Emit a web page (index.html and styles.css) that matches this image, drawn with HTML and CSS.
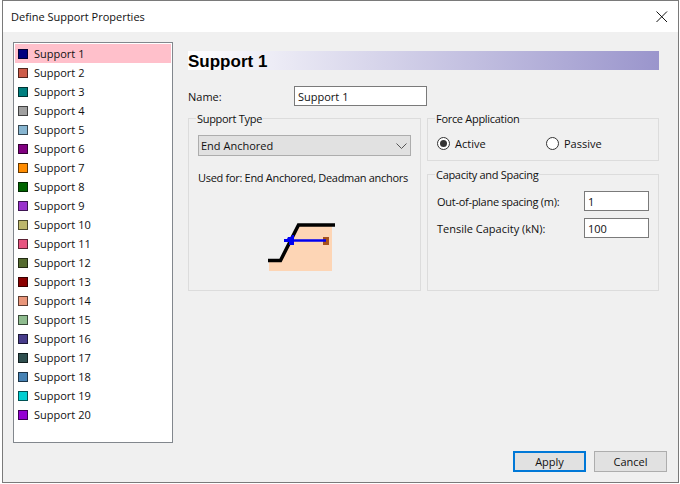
FILE: index.html
```html
<!DOCTYPE html>
<html lang="en">
<head>
<meta charset="utf-8">
<title>Define Support Properties</title>
<link rel="stylesheet" href="styles.css">
</head>
<body>
<div class="dialog">
  <header class="titlebar">
    <span class="title">Define Support Properties</span>
    <svg class="close" width="12" height="12" viewBox="0 0 12 12"><path d="M.5.5l10.500 10.500M11 .5L.5 11" stroke="#111" stroke-width="1" fill="none"/></svg>
  </header>
  <div class="content">
    <main class="main">
      <ul class="list">
        <li class="item selected"><i class="swatch c1"></i>Support 1</li>
        <li class="item"><i class="swatch c2"></i>Support 2</li>
        <li class="item"><i class="swatch c3"></i>Support 3</li>
        <li class="item"><i class="swatch c4"></i>Support 4</li>
        <li class="item"><i class="swatch c5"></i>Support 5</li>
        <li class="item"><i class="swatch c6"></i>Support 6</li>
        <li class="item"><i class="swatch c7"></i>Support 7</li>
        <li class="item"><i class="swatch c8"></i>Support 8</li>
        <li class="item"><i class="swatch c9"></i>Support 9</li>
        <li class="item"><i class="swatch c10"></i>Support 10</li>
        <li class="item"><i class="swatch c11"></i>Support 11</li>
        <li class="item"><i class="swatch c12"></i>Support 12</li>
        <li class="item"><i class="swatch c13"></i>Support 13</li>
        <li class="item"><i class="swatch c14"></i>Support 14</li>
        <li class="item"><i class="swatch c15"></i>Support 15</li>
        <li class="item"><i class="swatch c16"></i>Support 16</li>
        <li class="item"><i class="swatch c17"></i>Support 17</li>
        <li class="item"><i class="swatch c18"></i>Support 18</li>
        <li class="item"><i class="swatch c19"></i>Support 19</li>
        <li class="item"><i class="swatch c20"></i>Support 20</li>
      </ul>
      <section class="panel">
        <h1 class="heading">Support 1</h1>
        <div class="name-row">
          <span class="name-label">Name:</span>
          <div class="field name-field">Support 1</div>
        </div>
        <div class="groups">
          <div class="group type-group">
            <span class="legend">Support Type</span>
            <div class="select">
              <span>End Anchored</span>
              <svg width="11" height="6" viewBox="0 0 11 6"><path d="M.5.5l5 5 5-5" fill="none" stroke="#555" stroke-width="1"/></svg>
            </div>
            <p class="used">Used for: End Anchored, Deadman anchors</p>
            <svg class="diagram" width="68" height="52" viewBox="0 0 68 52">
              <path d="M1 40H13L31 4H64V49H1Z" fill="#fdd5b5"/>
              <path d="M0 38.500H12.500L30.500 3H67" fill="none" stroke="#000" stroke-width="3.500"/>
              <rect x="55" y="15" width="6" height="8" fill="#a8521c"/>
              <path d="M20 18.500H58" stroke="#0000f0" stroke-width="2.500"/>
              <path d="M16 17h3l1-2h3l1-2h2v10h-5v-3h-5z" fill="#0000f0"/>
            </svg>
          </div>
          <div class="side">
            <div class="group force-group">
              <span class="legend">Force Application</span>
              <div class="radios">
                <span class="radio-option active"><i class="radio"></i>Active</span>
                <span class="radio-option"><i class="radio"></i>Passive</span>
              </div>
            </div>
            <div class="group capacity-group">
              <span class="legend">Capacity and Spacing</span>
              <div class="row"><span class="tight">Out-of-plane spacing (m):</span><div class="field small-field">1</div></div>
              <div class="row"><span>Tensile Capacity (kN):</span><div class="field small-field">100</div></div>
            </div>
          </div>
        </div>
      </section>
    </main>
    <footer class="footer">
      <button class="btn primary">Apply</button>
      <button class="btn">Cancel</button>
    </footer>
  </div>
</div>
</body>
</html>
```
FILE: styles.css
```css
* { box-sizing: border-box; }
html, body { margin: 0; padding: 0; }
body {
  width: 680px;
  height: 484px;
  background: #fff;
  padding: 0 1px 1px 2px;
  font-family: "Open Sans", "Noto Sans", sans-serif;
  font-size: 11px;
  color: #111;
  overflow: hidden;
}
.dialog {
  width: 100%;
  height: 100%;
  border: 1px solid #7a7a7a;
  background: #f0f0f0;
  display: flex;
  flex-direction: column;
}
.titlebar {
  height: 31px;
  flex: none;
  background: #fff;
  display: flex;
  align-items: center;
  justify-content: space-between;
  padding: 0 10px 0 8px;
}
.content {
  flex: 1;
  display: flex;
  flex-direction: column;
  padding: 10px;
}
.main { flex: 1; display: flex; gap: 15px; }
.list {
  width: 160px;
  height: 401px;
  flex: none;
  margin: 0;
  padding: 1px;
  list-style: none;
  background: #fff;
  border: 1px solid #82878d;
}
.item {
  height: 19px;
  display: flex;
  align-items: center;
  padding-left: 3px;
}
.selected { background: #ffc0cb; }
.swatch {
  width: 10px;
  height: 10px;
  margin-right: 6px;
  border: 1px solid rgba(0,0,0,.6);
}
.c1 { background-color: #000080; }
.c2 { background-color: #cd5c49; }
.c3 { background-color: #008080; }
.c4 { background-color: #a0a0a0; }
.c5 { background-color: #87b5d0; }
.c6 { background-color: #800080; }
.c7 { background-color: #ff8c00; }
.c8 { background-color: #006400; }
.c9 { background-color: #9932cc; }
.c10 { background-color: #bdb76b; }
.c11 { background-color: #e75480; }
.c12 { background-color: #556b2f; }
.c13 { background-color: #8b0000; }
.c14 { background-color: #e9967a; }
.c15 { background-color: #8fbc8f; }
.c16 { background-color: #483d8b; }
.c17 { background-color: #2f4f4f; }
.c18 { background-color: #4682b4; }
.c19 { background-color: #00ced1; }
.c20 { background-color: #9400d3; }
.panel { width: 471px; flex: none; padding-top: 9px; }
.heading {
  margin: 0;
  height: 19px;
  font: bold 17px/21px "Liberation Sans", sans-serif;
  color: #000;
  background: linear-gradient(90deg, #fff, #9a95cc);
}
.name-row {
  display: flex;
  align-items: center;
  height: 20px;
  margin-top: 16px;
}
.name-label { width: 106px; }
.field {
  background: #fff;
  border: 1px solid #7a7a7a;
  display: flex;
  align-items: center;
  padding-left: 3px;
  height: 20px;
}
.name-field { width: 133px; }
.groups { display: flex; gap: 6px; margin-top: 12px; height: 173px; }
.group {
  position: relative;
  border: 1px solid #dcdcdc;
}
.legend {
  position: absolute;
  top: -8px;
  left: 7px;
  padding: 0 1px;
  line-height: 16px;
  letter-spacing: -.3px;
  background: #f0f0f0;
}
.type-group { width: 233px; padding: 16px 9px 0; }
.select {
  height: 21px;
  display: flex;
  align-items: center;
  justify-content: space-between;
  padding: 0 3px 0 2px;
  background: #e1e1e1;
  border: 1px solid #adadad;
}
.used { margin: 14px 0 0; line-height: 16px; white-space: nowrap; letter-spacing: -.3px; }
.tight { letter-spacing: -.28px; }
.diagram { display: block; margin: 36px 0 0 70px; }
.side { width: 232px; display: flex; flex-direction: column; gap: 13px; }
.force-group { height: 43px; }
.radios { display: flex; padding: 16px 0 0 9px; }
.radio-option { display: flex; align-items: center; width: 109px; height: 16px; }
.radio {
  width: 13px;
  height: 13px;
  border-radius: 50%;
  border: 1px solid #333;
  background: #fff;
  margin-right: 5px;
  position: relative;
}
.active .radio::after {
  content: "";
  position: absolute;
  inset: 2px;
  border-radius: 50%;
  background: #333;
}
.capacity-group { flex: 1; padding: 16px 9px 0 9px; display: flex; flex-direction: column; gap: 7px; }
.row { display: flex; justify-content: space-between; align-items: center; }
.small-field { width: 65px; }
.footer { display: flex; justify-content: flex-end; gap: 8px; padding-right: 1px; }
.btn {
  width: 73px;
  height: 21px;
  padding: 0 0 1px;
  font: inherit;
  color: #111;
  background: #e1e1e1;
  border: 1px solid #adadad;
}
.primary { border: 2px solid #0078d7; }
```
